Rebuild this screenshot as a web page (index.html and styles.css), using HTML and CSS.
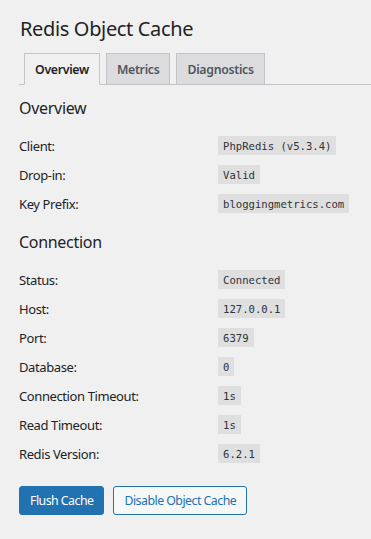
FILE: index.html
```html
<!DOCTYPE html>
<html lang="en">
<head>
<meta charset="utf-8">
<title>Redis Object Cache</title>
<link rel="stylesheet" href="styles.css">
</head>
<body>
<div class="wrap">
  <h1 class="title">Redis Object Cache</h1>
  <nav class="tabs">
    <span class="tab active">Overview</span>
    <span class="tab">Metrics</span>
    <span class="tab">Diagnostics</span>
  </nav>

  <h2 class="section">Overview</h2>
  <div class="table">
    <div class="row"><span class="label">Client:</span><code>PhpRedis (v5.3.4)</code></div>
    <div class="row"><span class="label">Drop-in:</span><code>Valid</code></div>
    <div class="row"><span class="label">Key Prefix:</span><code>bloggingmetrics.com</code></div>
  </div>

  <h2 class="section section-2">Connection</h2>
  <div class="table table-2">
    <div class="row"><span class="label">Status:</span><code>Connected</code></div>
    <div class="row"><span class="label">Host:</span><code>127.0.0.1</code></div>
    <div class="row"><span class="label">Port:</span><code>6379</code></div>
    <div class="row"><span class="label">Database:</span><code>0</code></div>
    <div class="row"><span class="label">Connection Timeout:</span><code>1s</code></div>
    <div class="row"><span class="label">Read Timeout:</span><code>1s</code></div>
    <div class="row"><span class="label">Redis Version:</span><code>6.2.1</code></div>
  </div>

  <div class="actions">
    <button class="btn btn-primary">Flush Cache</button>
    <button class="btn btn-secondary">Disable Object Cache</button>
  </div>
</div>
</body>
</html>
```

FILE: styles.css
```css
html, body {
  margin: 0;
  padding: 0;
  background: #f0f0f1;
}
body {
  font-family: "Noto Sans", "Open Sans", sans-serif;
  color: #1d2327;
  font-size: 13px;
}
.wrap {
  padding: 0 19px;
}
.title {
  margin: 15px 0 0 1px;
  font-size: 20px;
  line-height: 28px;
  font-weight: 400;
  letter-spacing: -0.35px;
}
.tabs {
  display: flex;
  align-items: flex-end;
  gap: 6px;
  padding: 10px 0 0 5px;
  border-bottom: 1px solid #c3c4c7;
  margin-right: -19px;
}
.tab {
  box-sizing: border-box;
  height: 32px;
  margin-bottom: -1px;
  padding: 0 10px;
  display: flex;
  align-items: center;
  border: 1px solid #c3c4c7;
  background: #dcdcde;
  color: #50575e;
  font-size: 12.3px;
  font-weight: 600;
  letter-spacing: -0.3px;
}
.tab.active {
  background: #f0f0f1;
  border-bottom-color: #f0f0f1;
  color: #1d2327;
}
.tab-narrow {
  padding: 0 9px;
}
.section {
  margin: 11px 0 0;
  font-size: 16px;
  line-height: 24px;
  font-weight: 400;
  letter-spacing: -0.3px;
}
.section-2 {
  margin-top: 12px;
}
.table {
  margin-top: 11px;
}
.row {
  display: grid;
  grid-template-columns: 199px auto;
  align-items: center;
  justify-items: start;
  height: 29px;
}
.label {
  font-size: 13px;
  letter-spacing: -0.4px;
}
code {
  font-family: "DejaVu Sans Mono", "Liberation Mono", monospace;
  font-size: 10.6px;
  line-height: 14px;
  padding: 3px 5px 2px;
  background: rgba(0, 0, 0, 0.07);
  color: #2c3338;
}
.actions {
  display: flex;
  gap: 9px;
  margin-top: 18px;
}
.btn {
  box-sizing: border-box;
  height: 29px;
  padding: 0 10px;
  border-radius: 3px;
  border: 1px solid #2271b1;
  font-family: inherit;
  font-size: 12.3px;
  letter-spacing: -0.5px;
}
.btn-primary {
  background: #2271b1;
  color: #fff;
}
.btn-secondary {
  background: #f6f7f7;
  color: #2271b1;
}
```
